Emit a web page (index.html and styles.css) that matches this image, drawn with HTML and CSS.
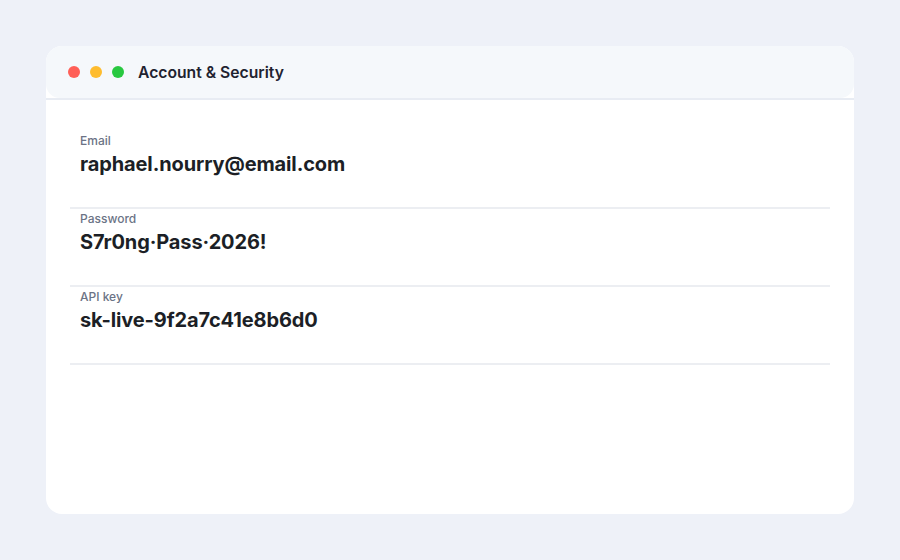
FILE: index.html
```html
<!DOCTYPE html>
<html lang="en">
<head>
<meta charset="utf-8">
<title>Account &amp; Security</title>
<link rel="stylesheet" href="styles.css">
</head>
<body>
<div class="card">
  <div class="titlebar">
    <div class="dots">
      <span class="dot red"></span>
      <span class="dot yellow"></span>
      <span class="dot green"></span>
    </div>
    <div class="title">Account &amp; Security</div>
  </div>
  <div class="content">
    <div class="row">
      <div class="label">Email</div>
      <div class="value">raphael.nourry@email.com</div>
    </div>
    <div class="row">
      <div class="label">Password</div>
      <div class="value">S7r0ng·Pass·2026!</div>
    </div>
    <div class="row">
      <div class="label">API key</div>
      <div class="value">sk-live-9f2a7c41e8b6d0</div>
    </div>
  </div>
</div>
</body>
</html>
```
FILE: styles.css
```css
html, body {
  margin: 0;
  padding: 0;
}
body {
  background: #eef1f8;
  font-family: Inter, "Noto Sans", "Liberation Sans", sans-serif;
  padding: 46px;
  height: 560px;
  box-sizing: border-box;
}
.card {
  background: #ffffff;
  border-radius: 16px;
  height: 468px;
  overflow: hidden;
}
.titlebar {
  height: 52px;
  background: #f5f8fb;
  border-radius: 14px;
  display: flex;
  align-items: center;
  padding-left: 22px;
  box-sizing: border-box;
}
.dots {
  display: flex;
  gap: 10px;
  margin-right: 14px;
}
.dot {
  width: 12px;
  height: 12px;
  border-radius: 50%;
  display: block;
}
.red { background: #ff5f57; }
.yellow { background: #febc2e; }
.green { background: #28c840; }
.title {
  font-size: 15.7px;
  font-weight: 600;
  color: #1f2330;
}
.content {
  border-top: 2px solid #e8ecf3;
  padding: 31px 24px 0;
}
.row {
  padding: 2px 10px 0;
  height: 74px;
  border-bottom: 2px solid #eceef2;
}
.label {
  font-size: 12px;
  line-height: 15px;
  font-weight: 500;
  color: #6b7385;
  margin-bottom: 4px;
}
.value {
  font-size: 20px;
  line-height: 24px;
  font-weight: 700;
  letter-spacing: -0.12px;
  color: #1c1f26;
}
```
